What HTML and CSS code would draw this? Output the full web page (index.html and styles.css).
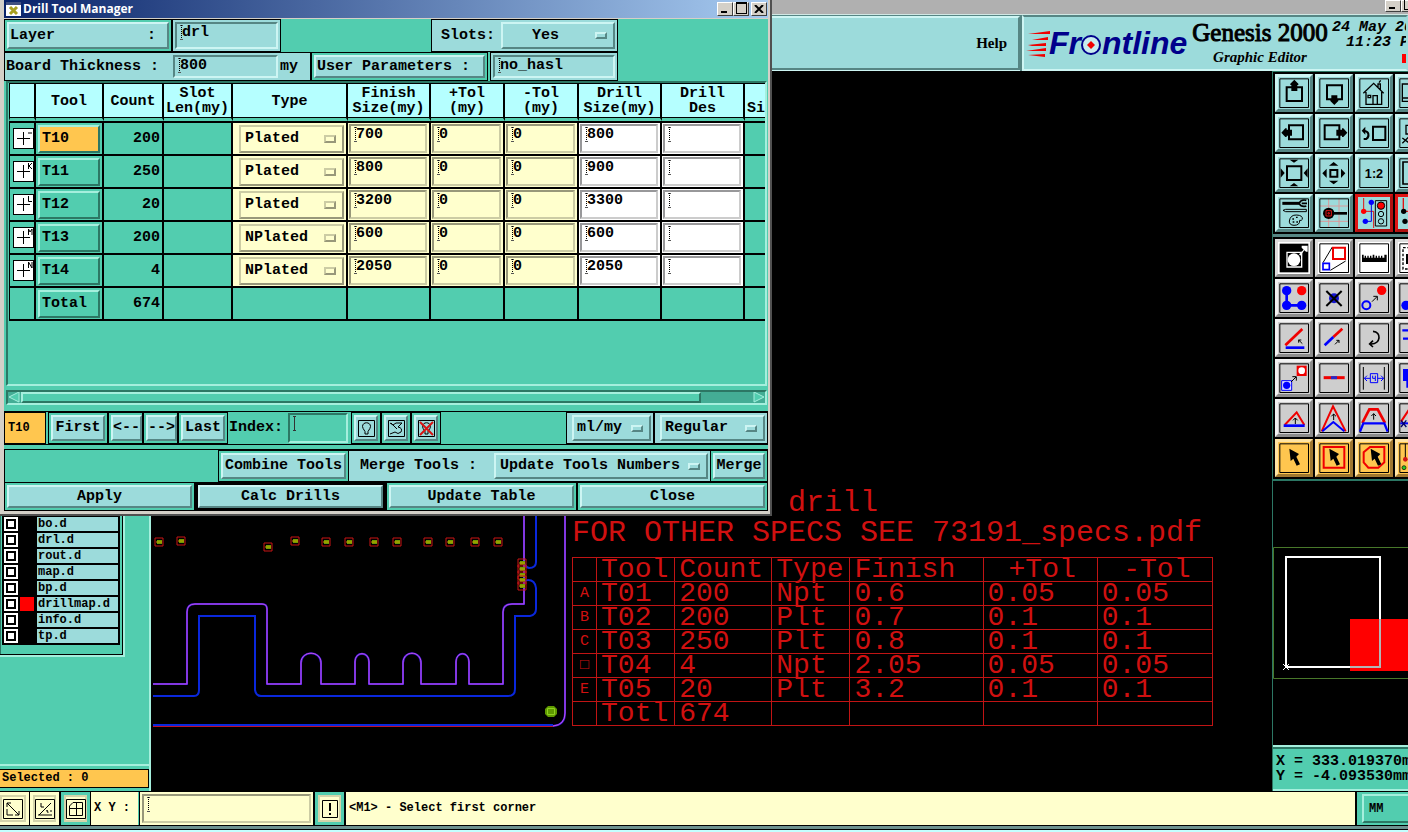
FILE: index.html
```html
<!DOCTYPE html>
<html lang="en">
<head>
<meta charset="utf-8">
<title>Genesis 2000 Graphic Editor</title>
<link rel="stylesheet" href="styles.css">
</head>
<body>
<div class="app">
  <div class="app-title"><span class="wbtn min"></span><span class="wbtn max"></span></div>
  <header class="head">
    <nav class="menubar"><a href="#help">Help</a></nav>
    <div class="brand">
      <svg class="logo" width="164" height="40" viewBox="0 0 164 40" role="img" aria-label="Frontline">
        <g fill="#f00000"><path d="M0 9 22 6V9H5zM4 15 20 12V15zM0 20 18 18V21H4zM-2 26 18 23V26zM0 30 17 29V32z"/></g>
        <g class="logo-text"><text x="21" y="29">Fr</text><text x="74" y="29">ntline</text></g>
        <circle cx="63" cy="20" r="9" fill="#c8ecee" stroke="#00008b" stroke-width="2"/><path d="M63 16l4 4-4 4-4-4z" fill="#f00000"/>
      </svg>
      <div class="product"><span class="name">Genesis 2000</span><span class="sub">Graphic Editor</span></div>
      <div class="clock"><span>24 May 20</span><span class="time">11:23 P</span><i class="led"></i></div>
    </div>
  </header>
  <main class="work">
    <aside class="side">
      <div class="layers-wrap">
        <ul class="layers">
          <li><label><input type="checkbox"><i></i><span>bo.d</span></label></li>
          <li><label><input type="checkbox"><i></i><span>drl.d</span></label></li>
          <li><label><input type="checkbox"><i></i><span>rout.d</span></label></li>
          <li><label><input type="checkbox"><i></i><span>map.d</span></label></li>
          <li><label><input type="checkbox"><i></i><span>bp.d</span></label></li>
          <li><label><input type="checkbox"><i class="on"></i><span>drillmap.d</span></label></li>
          <li><label><input type="checkbox"><i></i><span>info.d</span></label></li>
          <li><label><input type="checkbox"><i></i><span>tp.d</span></label></li>
        </ul>
      </div>
      <div class="selected">Selected : 0</div>
    </aside>
    <section class="canvas">
      <svg class="board" width="420" height="240" viewBox="151 500 420 240" fill="none">
        <defs>
          <g id="pad"><path d="M-4-4H4V4H-4z" stroke="#c81414"/><path d="M-2-2H3V2H-2z" fill="#6d9a00"/><path d="M-3 0H3" stroke="#c8a000"/></g>
        </defs>
        <g stroke="#0a28dc" stroke-width="2">
          <path d="M153 696H194Q199 696 199 690V616H255V690Q256 696 261 696H508Q515 696 515 689V616H530Q536 615 536 609V588Q535 580 528 580Q524 580 524 586"/>
          <path d="M536 500V562Q536 568 529 568Q525 567 524 562"/><path d="M153 725H553"/>
        </g>
        <path d="M153 726.5H553" stroke="#c01030"/>
        <path d="M524 500V604H512Q503 604 503 612V684H469V662C469 651 456 651 456 662V684H421V663C421 650 403 650 403 663V684H369V662C369 651 355 651 355 662V684H321V663C321 650 301 650 301 663V684H267V609Q267 604 262 604H195Q187 604 187 612V684H153M553 726Q565 725 565 713V500" stroke="#3c1edc" stroke-width="2"/>
        <path d="M524 500V604H512Q503 604 503 612V684H469V662C469 651 456 651 456 662V684H421V663C421 650 403 650 403 663V684H369V662C369 651 355 651 355 662V684H321V663C321 650 301 650 301 663V684H267V609Q267 604 262 604H195Q187 604 187 612V684H153M553 726Q565 725 565 713V500" stroke="#c850e6"/>
        <use href="#pad" x="159" y="542"/><use href="#pad" x="181" y="541"/><use href="#pad" x="268" y="547"/><use href="#pad" x="295" y="541"/>
        <use href="#pad" x="326" y="542"/><use href="#pad" x="349" y="542"/><use href="#pad" x="374" y="542"/><use href="#pad" x="397" y="542"/>
        <use href="#pad" x="428" y="542"/><use href="#pad" x="450" y="542"/><use href="#pad" x="475" y="542"/><use href="#pad" x="498" y="542"/>
        <use href="#pad" x="522" y="563"/><use href="#pad" x="522" y="569"/><use href="#pad" x="522" y="575"/><use href="#pad" x="522" y="580"/><use href="#pad" x="522" y="586"/>
        <path d="M548 706H554L557 709V714L554 717H548L545 714V709z" fill="#5f9a00"/><path d="M547.500 708.500H554.500V714.500H547.500z" stroke="#8fd020"/>
      </svg>
      <div class="plot">
        <p class="plot-title">drill</p>
        <p>FOR OTHER SPECS SEE 73191_specs.pdf</p>
        <table>
          <colgroup><col class="p1"><col class="p2"><col class="p3"><col class="p4"><col class="p5"><col class="p6"><col class="p7"></colgroup>
          <thead><tr><th></th><th>Tool</th><th>Count</th><th>Type</th><th>Finish</th><th class="c">+Tol</th><th class="c">-Tol</th></tr></thead>
          <tbody>
          <tr><td class="sym">A</td><td>T01</td><td>200</td><td>Npt</td><td>0.6</td><td>0.05</td><td>0.05</td></tr>
          <tr><td class="sym">B</td><td>T02</td><td>200</td><td>Plt</td><td>0.7</td><td>0.1</td><td>0.1</td></tr>
          <tr><td class="sym">C</td><td>T03</td><td>250</td><td>Plt</td><td>0.8</td><td>0.1</td><td>0.1</td></tr>
          <tr><td class="sym">□</td><td>T04</td><td>4</td><td>Npt</td><td>2.05</td><td>0.05</td><td>0.05</td></tr>
          <tr><td class="sym">E</td><td>T05</td><td>20</td><td>Plt</td><td>3.2</td><td>0.1</td><td>0.1</td></tr>
          <tr><td></td><td>Totl</td><td>674</td><td></td><td></td><td></td><td></td></tr>
          </tbody>
        </table>
      </div>
    </section>
    <aside class="right">
      <svg width="0" height="0" class="defs"><defs>
        <path id="fr" d="M14.500 14.500H100.500V100.500H14.500z" fill="none" stroke="#000" stroke-width="3"/>
        <path id="cur" d="M43 29 72 45 64 53 75 76 65 80 55 59 47 66z"/>
        <path id="nw" d="M0 0-15 15M-11-1H1V11" fill="none" stroke="#000" stroke-width="3"/>
        <path id="up" d="M0 18V0M-7 7 0 0 7 7" fill="none" stroke="#000" stroke-width="3"/>
      </defs></svg>
      <div class="tools cyan">
        <button aria-label="Pan up"><svg viewBox="9 9 96 96"><use href="#fr"/><path d="M35 40H81V81H35z" fill="none" stroke="#000" stroke-width="6"/><path d="M58 17 64 23 70 29V33H67V51H49V33H46V29L52 23z"/></svg></button>
        <button aria-label="Pan down"><svg viewBox="9 9 96 96"><use href="#fr"/><path d="M36 34H81V76H36z" fill="none" stroke="#000" stroke-width="6"/><path d="M49 64H67V78H70V81L58 93 46 81V78H49z"/></svg></button>
        <button aria-label="Home"><svg viewBox="9 9 96 96"><use href="#fr"/><path d="M25 58 56 28 86 58M33 54V91H80V54M54 91V65H67V91M39 64H47V71H39zM69 40V30H76V47M72 26 77 19" fill="none" stroke="#000" stroke-width="4"/></svg></button>
        <button aria-label="Window"><svg viewBox="9 9 96 96"><use href="#fr"/><path d="M22 30H90V82H22zM22 72H90" fill="none" stroke="#000" stroke-width="4"/></svg></button>
        <button aria-label="Pan left"><svg viewBox="9 9 96 96"><use href="#fr"/><path d="M42 34H84V76H42z" fill="none" stroke="#000" stroke-width="6"/><path d="M19 56 31 43H35V47H51V65H35V69H31z"/></svg></button>
        <button aria-label="Pan right"><svg viewBox="9 9 96 96"><use href="#fr"/><path d="M29 34H73V76H29z" fill="none" stroke="#000" stroke-width="6"/><path d="M97 56 85 43H81V47H64V65H81V69H85z"/></svg></button>
        <button aria-label="Previous view"><svg viewBox="9 9 96 96"><use href="#fr"/><path d="M54 38H91V78H54z" fill="none" stroke="#000" stroke-width="6"/><path d="M26 75H34Q42 70 40 59Q38 51 26 50" fill="none" stroke="#000" stroke-width="6"/><path d="M20 50 31 38V62z"/></svg></button>
        <button aria-label="Views"><svg viewBox="9 9 96 96"><use href="#fr"/><path d="M33 34H80V60H33zM22 72 44 88M22 88 44 66" fill="none" stroke="#000" stroke-width="4"/></svg></button>
        <button aria-label="Zoom out"><svg viewBox="9 9 96 96"><use href="#fr"/><path d="M36 37H79V78H36z" fill="none" stroke="#000" stroke-width="6"/><path d="M44 17H70L57 26zM44 97H70L57 87zM17 43V71L29 57zM98 43V71L86 57z"/></svg></button>
        <button aria-label="Zoom in"><svg viewBox="9 9 96 96"><use href="#fr"/><path d="M46 48H67V68H46z" fill="none" stroke="#000" stroke-width="6"/><path d="M42 35H70L56 24zM42 80H70L56 91zM35 44V72L22 58zM78 44V72L91 58z"/></svg></button>
        <button aria-label="Zoom 1:2"><svg viewBox="9 9 96 96"><use href="#fr"/><text x="57" y="72" text-anchor="middle" class="zoomtxt">1:2</text></svg></button>
        <button aria-label="Fit"><svg viewBox="9 9 96 96"><use href="#fr"/><path d="M24 24H90V90H24z" fill="none" stroke="#000" stroke-width="5"/></svg></button>
        <button aria-label="Setup"><svg viewBox="9 9 96 96"><use href="#fr"/><path d="M22 28H72" stroke="#000" stroke-width="9"/><path d="M94 19Q78 15 72 28Q79 41 94 36M80 28H96" fill="none" stroke="#000" stroke-width="5"/><path d="M24 49 32 46H94V53H32zM43 81Q46 62 65 63Q84 64 82 76Q79 81 74 79Q75 94 57 94Q42 93 43 81z" fill="none" stroke="#000" stroke-width="3"/><path d="M52 75h5M63 70h5M53 84h5M64 84h5" stroke="#000" stroke-width="4"/></svg></button>
        <button aria-label="Snap"><svg viewBox="9 9 96 96"><path d="M41 14V100M72 14V100M14 36H100M14 82H100" stroke="#d89a9a" stroke-width="3"/><use href="#fr"/><circle cx="41" cy="58" r="17"/><path d="M55 58H96" stroke="#000" stroke-width="8"/><path d="M33 50H49V66H33zM39 56H43V60H39z" fill="none" stroke="#e01414" stroke-width="3"/></svg></button>
        <button class="hot" aria-label="Display control"><svg viewBox="9 9 96 96"><path d="M26 12V52H56V102" fill="none" stroke="#e01414" stroke-width="3"/><path d="M49 24V82H30" fill="none" stroke="#0000e0" stroke-width="3"/><circle cx="49" cy="25" r="8" fill="#00f"/><circle cx="31" cy="82" r="8" fill="#00f"/><circle cx="26" cy="52" r="8" fill="#f00"/><path d="M61 20H95V96H61z" fill="none" stroke="#000" stroke-width="3"/><circle cx="78" cy="35" r="11" fill="#f00" stroke="#000" stroke-width="3"/><circle cx="78" cy="60" r="8" fill="none" stroke="#000" stroke-width="3"/><circle cx="78" cy="82" r="8" fill="none" stroke="#000" stroke-width="3"/></svg></button>
        <button class="hot" aria-label="Nets"><svg viewBox="9 9 96 96"><path d="M25 12V52H56" fill="none" stroke="#e01414" stroke-width="4"/><circle cx="26" cy="52" r="8"/><circle cx="30" cy="82" r="8"/></svg></button>
      </div>
      <div class="tools gray">
        <button class="white" aria-label="Select feature"><svg viewBox="9 9 96 96"><path d="M14 14H100V100H14z"/><path d="M36 40H80V84H36z" fill="none" stroke="#fff" stroke-width="4"/><circle cx="57" cy="62" r="19" fill="#fff"/><path d="M72 46 86 32 80 26V20H98V38H93L88 34 76 50z" fill="#fff"/></svg></button>
        <button class="white" aria-label="Resize"><svg viewBox="9 9 96 96"><use href="#fr"/><path d="M24 71 52 24M46 94 92 66" stroke="#000" stroke-width="3"/><path d="M54 26H90V60H54z" fill="none" stroke="#f00000" stroke-width="6"/><path d="M24 73H43V92H24z" fill="none" stroke="#00f" stroke-width="5"/></svg></button>
        <button class="white" aria-label="Measure"><svg viewBox="9 9 96 96"><use href="#fr"/><path d="M21 47H26V56H29V50H33V56H37V50H41V56H45V50H49V56H53V47H58V56H62V50H66V56H70V50H74V56H78V50H82V56H88V47H95V69H21z"/></svg></button>
        <button class="white" aria-label="Area"><svg viewBox="9 9 96 96"><use href="#fr"/><path d="M24 26H90V90H24z" fill="none" stroke="#000" stroke-width="4" stroke-dasharray="8 5"/><path d="M36 45V75" stroke="#000" stroke-width="6"/></svg></button>
        <button aria-label="Move"><svg viewBox="9 9 96 96"><use href="#fr"/><path d="M35 35V79H80" fill="none" stroke="#00f" stroke-width="8"/><g fill="#00f"><circle cx="35" cy="35" r="14"/><circle cx="35" cy="79" r="14"/><circle cx="80" cy="79" r="14"/></g><circle cx="80" cy="35" r="14" fill="#f00"/></svg></button>
        <button aria-label="Delete"><svg viewBox="9 9 96 96"><use href="#fr"/><circle cx="57" cy="58" r="15" fill="#1414d0"/><path d="M34 36 80 81M80 36 34 81" stroke="#000" stroke-width="6"/></svg></button>
        <button aria-label="Copy"><svg viewBox="9 9 96 96"><use href="#fr"/><circle cx="34" cy="79" r="12" fill="none" stroke="#00f" stroke-width="6"/><circle cx="80" cy="34" r="14" fill="#f00"/><use href="#nw" x="66" y="53"/></svg></button>
        <button aria-label="Add pad"><svg viewBox="9 9 96 96"><use href="#fr"/><circle cx="33" cy="79" r="14" fill="#00f"/></svg></button>
        <button aria-label="Rotate line"><svg viewBox="9 9 96 96"><use href="#fr"/><path d="M31 79 82 30" stroke="#f00000" stroke-width="8"/><path d="M32 86H88" stroke="#00f" stroke-width="8"/><path d="M82 74 71 63M71 71V63H79" fill="none" stroke="#000" stroke-width="3"/></svg></button>
        <button aria-label="Extend line"><svg viewBox="9 9 96 96"><use href="#fr"/><path d="M55 54 82 29" stroke="#f00000" stroke-width="8"/><path d="M29 79 55 54" stroke="#00f" stroke-width="8"/><path d="M60 76 72 64M64 64H72V72" fill="none" stroke="#000" stroke-width="3"/></svg></button>
        <button aria-label="Arc"><svg viewBox="9 9 96 96"><use href="#fr"/><path d="M54 37C80 38 78 76 48 75M54 65 44 75 54 84" fill="none" stroke="#000" stroke-width="5"/></svg></button>
        <button aria-label="Align"><svg viewBox="9 9 96 96"><use href="#fr"/><path d="M22 34H60M24 59H60" stroke="#00f" stroke-width="7"/></svg></button>
        <button aria-label="Replace"><svg viewBox="9 9 96 96"><use href="#fr"/><path d="M65 20H95V51H65z" fill="#f00000"/><circle cx="80" cy="35" r="10" fill="#fff"/><path d="M20 65H50V94H20z" fill="#e0e0ff" stroke="#00f" stroke-width="3"/><circle cx="35" cy="79" r="11" fill="#00f"/><use href="#nw" x="63" y="54"/></svg></button>
        <button aria-label="Merge line"><svg viewBox="9 9 96 96"><use href="#fr"/><path d="M26 56H89" stroke="#f00000" stroke-width="9"/><path d="M48 56H66" stroke="#2828c8" stroke-width="9"/></svg></button>
        <button aria-label="Spacing"><svg viewBox="9 9 96 96"><path d="M25 24V92M88 24V92" stroke="#000" stroke-width="3"/><use href="#fr"/><path d="M28 58H46M68 58H86M36 50 28 58 36 66M78 50 86 58 78 66M46 44H68V71H46zM53 50V58H61V66M61 50V58" fill="none" stroke="#00f" stroke-width="3"/></svg></button>
        <button aria-label="Text"><svg viewBox="9 9 96 96"><use href="#fr"/><path d="M24 30H90V66H44V86H34V66H24z" fill="#00f"/></svg></button>
        <button aria-label="Triangle"><svg viewBox="9 9 96 96"><use href="#fr"/><path d="M29 78 65 40 88 78" fill="none" stroke="#f00000" stroke-width="6"/><path d="M26 80H89" stroke="#00f" stroke-width="8"/><use href="#up" x="61" y="57"/></svg></button>
        <button aria-label="Corner"><svg viewBox="9 9 96 96"><use href="#fr"/><path d="M20 97 54 22 92 97" fill="none" stroke="#f00000" stroke-width="6"/><path d="M22 97 55 69 88 97" fill="none" stroke="#00f" stroke-width="6"/><use href="#up" x="56" y="45"/></svg></button>
        <button aria-label="Chamfer"><svg viewBox="9 9 96 96"><use href="#fr"/><path d="M22 72 43 31H68L90 72" fill="none" stroke="#f00000" stroke-width="8"/><path d="M15 98 25 73H88L98 98" fill="none" stroke="#00f" stroke-width="7"/><use href="#up" x="56" y="44"/></svg></button>
        <button aria-label="Trim"><svg viewBox="9 9 96 96"><use href="#fr"/><path d="M18 68 50 20" stroke="#f00000" stroke-width="6"/><path d="M16 73H60" stroke="#00f" stroke-width="6"/><path d="M18 64 34 84M34 64 18 84" stroke="#006" stroke-width="4"/></svg></button>
        <button class="gold" aria-label="Select"><svg viewBox="9 9 96 96"><use href="#fr"/><use href="#cur"/></svg></button>
        <button class="gold" aria-label="Select rectangle"><svg viewBox="9 9 96 96"><use href="#fr"/><path d="M26 24H88V86H26z" fill="none" stroke="#f00000" stroke-width="6"/><use href="#cur"/></svg></button>
        <button class="gold" aria-label="Select polygon"><svg viewBox="9 9 96 96"><use href="#fr"/><path d="M45 24H88V70L70 86H40L26 70V40z" fill="none" stroke="#f00000" stroke-width="6"/><use href="#cur" x="4"/></svg></button>
        <button class="gold" aria-label="Select net"><svg viewBox="9 9 96 96"><use href="#fr"/><path d="M31 14V60" stroke="#000" stroke-width="3"/><circle cx="31" cy="61" r="7" fill="#d01414"/><circle cx="27" cy="86" r="6" fill="#28c828" stroke="#000" stroke-width="2"/></svg></button>
      </div>
      <div class="overview">
        <svg width="135" height="132" viewBox="1273 548 135 132" fill="none">
          <path d="M1420 548.500H1273.500V679.500H1420" stroke="#48782a"/><path d="M1350 620H1420V672H1350z" fill="#f00"/>
          <path d="M1286 558H1380V668H1286z" stroke="#fff" stroke-width="2"/><path d="M1380 620V668H1350" stroke="#b4b4b4" stroke-width="2"/><path d="M1283 665 1289 671M1289 665 1283 671" stroke="#fff"/>
        </svg>
      </div>
      <div class="coords"><span>X = 333.019370mm</span><span>Y = -4.093530mm</span></div>
    </aside>
  </main>
  <footer class="status">
    <button class="sb first" aria-label="Corner mode"><svg width="20" height="20" viewBox="0 0 20 20"><path d="M.5.500H19.500V19.500H.5zM4 4 16 16M4 8V4H8M12 16H16V12M4 10V16H10" fill="none" stroke="#000"/></svg></button>
    <button class="sb" aria-label="Angle mode"><svg width="20" height="20" viewBox="0 0 20 20"><path d="M.5.500H19.500V19.500H.5zM3 16H17M4 16 16 4M6 4V8H9M11 12Q13 10 13 14M15 12H17" fill="none" stroke="#000"/></svg></button>
    <button class="sb teal" aria-label="Grid mode"><svg width="20" height="20" viewBox="0 0 20 20"><path d="M.5.500H19.500V19.500H.5zM3.500 7 7 3.500H16.500V16.500H3.500zM10.500 3V17M3 9.500H17" fill="none" stroke="#000"/></svg></button>
    <label class="xy" for="xy">X Y :</label>
    <span class="xyf"><input id="xy" class="in" type="text"></span>
    <button class="sb teal" aria-label="Alert"><svg width="16" height="18" viewBox="0 0 16 18"><path d="M.5.500H15.500V17.500H.5z" fill="none" stroke="#000"/><path d="M7 3H9V11H7zM7 13H9V15H7z"/></svg></button>
    <div class="msg">&lt;M1&gt; - Select first corner</div>
    <div class="unit"><button>MM</button></div>
  </footer>
</div>

<div class="dialog" role="dialog" aria-label="Drill Tool Manager">
  <div class="dlg-title">
    <svg width="15" height="14" viewBox="0 0 15 14"><path d="M0 0H15V14H0z" fill="#fff"/><path d="M0 0H15V3H0z" fill="#405080"/><path d="M4 5 11 12M11 5 4 12" stroke="#a8a020" stroke-width="3"/></svg>
    <h1>Drill Tool Manager</h1>
    <button class="wbtn min" aria-label="Minimize"></button><button class="wbtn max" aria-label="Maximize"></button><button class="wbtn close" aria-label="Close window"><svg width="10" height="8" viewBox="0 0 10 8"><path d="M1 0 9 8M9 0 1 8" stroke="#000" stroke-width="2"/></svg></button>
  </div>
  <div class="dlg-body">
    <div class="row r1">
      <div class="box w168"><button class="btn left wide"><span>Layer</span><span>:</span></button></div>
      <div class="box c w109"><input class="in" aria-label="Layer" value="drl"></div>
      <div class="grow"></div>
      <div class="box c slots"><label for="slots">Slots:</label><span class="opt"><select id="slots" class="mid"><option>Yes</option></select><i></i></span></div>
      <div class="tail"></div>
    </div>
    <div class="row r2">
      <div class="box c thick"><label for="bt">Board Thickness :</label><input id="bt" class="in" value="800"><span>my</span></div>
      <div class="box w177"><button class="btn left">User Parameters :</button></div>
      <div class="box c w128"><input class="in" aria-label="User Parameters" value="no_hasl"></div>
    </div>
    <div class="tablebox">
      <table class="drills">
        <colgroup><col class="k1"><col class="k2"><col class="k3"><col class="k4"><col class="k5"><col class="k6"><col class="k7"><col class="k7"><col class="k6"><col class="k6"><col class="k6"></colgroup>
        <thead><tr><th></th><th>Tool</th><th>Count</th><th>Slot<br>Len(my)</th><th>Type</th><th>Finish<br>Size(my)</th><th>+Tol<br>(my)</th><th>-Tol<br>(my)</th><th>Drill<br>Size(my)</th><th>Drill<br>Des</th><th class="cut"><br>Si</th></tr></thead>
        <tbody>
          <tr><td><svg class="sym" viewBox="0 0 19 19"><path d="M9.500 3V16M3 9.500H16M14 4H18"/></svg></td><td><button class="tool gold">T10</button></td><td class="n">200</td><td></td><td class="y"><span class="opt"><select aria-label="T10 type"><option>Plated</option></select><i></i></span></td><td class="y"><input class="in" aria-label="T10 finish" value="700"></td><td class="y"><input class="in" aria-label="T10 +tol" value="0"></td><td class="y"><input class="in" aria-label="T10 -tol" value="0"></td><td class="w"><input class="in" aria-label="T10 size" value="800"></td><td class="w"><input class="in" aria-label="T10 des"></td><td></td></tr>
          <tr><td><svg class="sym" viewBox="0 0 19 19"><path d="M9.500 3V16M3 9.500H16M14.500 1V7M15 4 18 1M15 4 18 7"/></svg></td><td><button class="tool">T11</button></td><td class="n">250</td><td></td><td class="y"><span class="opt"><select aria-label="T11 type"><option>Plated</option></select><i></i></span></td><td class="y"><input class="in" aria-label="T11 finish" value="800"></td><td class="y"><input class="in" aria-label="T11 +tol" value="0"></td><td class="y"><input class="in" aria-label="T11 -tol" value="0"></td><td class="w"><input class="in" aria-label="T11 size" value="900"></td><td class="w"><input class="in" aria-label="T11 des"></td><td></td></tr>
          <tr><td><svg class="sym" viewBox="0 0 19 19"><path d="M9.500 3V16M3 9.500H16M14.500 1V6.500H18"/></svg></td><td><button class="tool">T12</button></td><td class="n">20</td><td></td><td class="y"><span class="opt"><select aria-label="T12 type"><option>Plated</option></select><i></i></span></td><td class="y"><input class="in" aria-label="T12 finish" value="3200"></td><td class="y"><input class="in" aria-label="T12 +tol" value="0"></td><td class="y"><input class="in" aria-label="T12 -tol" value="0"></td><td class="w"><input class="in" aria-label="T12 size" value="3300"></td><td class="w"><input class="in" aria-label="T12 des"></td><td></td></tr>
          <tr><td><svg class="sym" viewBox="0 0 19 19"><path d="M9.500 3V16M3 9.500H16M14.500 7V1L16 4 18 1V7"/></svg></td><td><button class="tool">T13</button></td><td class="n">200</td><td></td><td class="y"><span class="opt"><select aria-label="T13 type"><option>NPlated</option></select><i></i></span></td><td class="y"><input class="in" aria-label="T13 finish" value="600"></td><td class="y"><input class="in" aria-label="T13 +tol" value="0"></td><td class="y"><input class="in" aria-label="T13 -tol" value="0"></td><td class="w"><input class="in" aria-label="T13 size" value="600"></td><td class="w"><input class="in" aria-label="T13 des"></td><td></td></tr>
          <tr><td><svg class="sym" viewBox="0 0 19 19"><path d="M9.500 3V16M3 9.500H16M14.500 7V1L18 7V1"/></svg></td><td><button class="tool">T14</button></td><td class="n">4</td><td></td><td class="y"><span class="opt"><select aria-label="T14 type"><option>NPlated</option></select><i></i></span></td><td class="y"><input class="in" aria-label="T14 finish" value="2050"></td><td class="y"><input class="in" aria-label="T14 +tol" value="0"></td><td class="y"><input class="in" aria-label="T14 -tol" value="0"></td><td class="w"><input class="in" aria-label="T14 size" value="2050"></td><td class="w"><input class="in" aria-label="T14 des"></td><td></td></tr>
          <tr><td></td><td><button class="tool">Total</button></td><td class="n">674</td><td></td><td></td><td></td><td></td><td></td><td></td><td></td><td></td></tr>
        </tbody>
      </table>
    </div>
    <div class="hscroll"><svg width="12" height="11" viewBox="0 0 12 11"><path d="M11 0V10L1 5z" fill="#52cdaf" stroke="#a5efdd"/></svg><span class="thumb"></span><span class="gap"></span><svg width="12" height="11" viewBox="0 0 12 11"><path d="M1 0V10L11 5z" fill="#52cdaf" stroke="#a5efdd"/></svg></div>
    <div class="row navrow">
      <div class="box gold cur">T10</div>
      <div class="box w60"><button class="btn">First</button></div>
      <div class="box w35"><button class="btn">&lt;--</button></div>
      <div class="box w35"><button class="btn">--&gt;</button></div>
      <div class="box w50"><button class="btn">Last</button></div>
      <label for="idx">Index:</label><input id="idx" class="in idx">
      <div class="box w30"><button class="btn" aria-label="Highlight"><svg width="17" height="17" viewBox="0 0 17 17" fill="none" stroke="#000"><path d="M.5.500H16.500V16.500H.5zM7 11.500Q4.500 8 4.500 6.500C4.500 1.500 12.500 1.500 12.500 6.500Q12.500 8 10 11.500V14H7z"/></svg></button></div>
      <div class="box w30"><button class="btn" aria-label="Redraw"><svg width="17" height="17" viewBox="0 0 17 17" fill="none" stroke="#000"><path d="M.5.500H16.500V16.500H.5zM2 3 5 5 8 3H14L10 7Q15 8 13 12Q10 15 7 12L2 14M3 3 9 9"/></svg></button></div>
      <div class="box w30"><button class="btn" aria-label="Clear highlight"><svg width="17" height="17" viewBox="0 0 17 17" fill="none" stroke="#000"><path d="M.5.500H16.500V16.500H.5zM7 11.500Q4.500 8 4.500 6.500C4.500 1.500 12.500 1.500 12.500 6.500Q12.500 8 10 11.500V14H7z"/><path d="M2 2 15 15M15 2 2 15" stroke="#d81414" stroke-width="2"/></svg></button></div>
      <div class="grow"></div>
      <div class="box c units"><span class="opt"><select aria-label="Units"><option>ml/my</option></select><i></i></span></div>
      <div class="box c mode"><span class="opt"><select aria-label="Mode"><option>Regular</option></select><i></i></span></div>
    </div>
    <div class="row mergerow">
      <div class="grow"></div>
      <div class="box w131"><button class="btn">Combine Tools</button></div>
      <div class="merge"><label for="mt">Merge Tools :</label><span class="opt"><select id="mt"><option>Update Tools Numbers</option></select><i></i></span></div>
      <div class="box w58"><button class="btn">Merge</button></div>
    </div>
    <div class="row actions">
      <div class="box"><button class="btn">Apply</button></div>
      <div class="box default"><button class="btn">Calc Drills</button></div>
      <div class="box"><button class="btn">Update Table</button></div>
      <div class="box"><button class="btn">Close</button></div>
    </div>
  </div>
</div>
</body>
</html>
```
FILE: styles.css
```css
:root {
  --teal: #52cdaf;
  --teal-hi: #a5efdd;
  --teal-lo: #2c7764;
  --cyan: #9cdbdb;
  --cyan-hi: #cdf5f3;
  --cyan-lo: #568684;
  --cream: #ffffcd;
  --gold: #ffc64f;
  --cap: #d4d0c8;
}
* { box-sizing: border-box; }
body {
  margin: 0;
  background: #000;
  color: #000;
  font: bold 15px/16px "Liberation Mono", monospace;
  overflow: hidden;
}
button, input, select {
  font: inherit;
  color: inherit;
  margin: 0;
  padding: 0;
  border-radius: 0;
  outline: 0;
}
button svg { display: block; }
ul, p { margin: 0; padding: 0; list-style: none; }

/* editor */
.app { display: flex; flex-direction: column; height: 100vh; }
.app-title {
  display: flex;
  justify-content: flex-end;
  height: 15px;
  margin-right: -9px;
  background: #b0b0b0;
  border-bottom: 1px solid #d0e8e4;
}
.wbtn {
  display: flex;
  align-items: flex-end;
  justify-content: center;
  flex: none;
  width: 16px;
  height: 14px;
  background: var(--cap);
  border: 1px solid;
  border-color: #fff #404040 #404040 #fff;
}
.app-title .wbtn { height: 12px; }
.min::after { content: ""; width: 6px; height: 2px; margin: 0 3px 2px 0; background: #000; }
.max::after { content: ""; width: 9px; height: 9px; margin-bottom: 1px; border: 1px solid #000; border-top-width: 2px; }
.wbtn.close { align-items: center; margin-left: 2px; }
.head { display: flex; height: 56px; flex: none; background: var(--cyan-lo); }
.menubar {
  flex: 1;
  display: flex;
  align-items: center;
  justify-content: flex-end;
  padding-right: 11px;
  margin: 1px 2px 1px 0;
  background: var(--cyan);
  border: 2px solid;
  border-color: var(--cyan-hi) var(--cyan-lo) var(--cyan-lo) var(--cyan-hi);
  box-shadow: 0 1px var(--cyan-hi);
  font: bold 15px/18px "Liberation Serif", serif;
}
.menubar a { color: #000; text-decoration: none; }
.brand {
  display: flex;
  width: 386px;
  overflow: hidden;
  background: var(--cyan);
  border: 2px solid;
  border-color: var(--cyan-lo) transparent var(--cyan-hi) var(--cyan-hi);
  padding: 3px 0 0 4px;
}
.logo { flex: none; margin-top: 5px; overflow: visible; }
.logo-text { font: italic bold 32px "Liberation Sans", sans-serif; fill: #00008b; }
.product { display: flex; flex-direction: column; align-items: center; flex: none; width: 136px; white-space: nowrap; font-family: "Liberation Serif", serif; }
.product .name { font-size: 25px; line-height: 26px; font-weight: 500; -webkit-text-stroke: 1px #000; }
.product .sub { font-size: 15px; line-height: 22px; font-style: italic; }
.clock { display: flex; flex-direction: column; flex: none; padding-left: 4px; font-style: italic; line-height: 15px; }
.clock .time { padding-left: 14px; }
.led { width: 4px; height: 9px; margin: 4px 0 0 70px; background: #f00; }
.work { flex: 1; display: grid; grid-template-columns: 151px 1fr 136px; min-height: 0; }
.side { display: flex; flex-direction: column; background: var(--teal); border-right: 2px solid var(--teal-hi); }
.layers-wrap {
  display: flex;
  flex-direction: column;
  justify-content: flex-end;
  width: 125px;
  height: 586px;
  padding: 0 3px 10px 2px;
  border-right: 2px solid var(--teal-hi);
  border-bottom: 2px solid var(--teal-hi);
  box-shadow: inset -1px -1px #000, inset 1px 0 var(--teal-lo);
}
.layers { background: #000; padding: 0 1px 1px 2px; font-size: 12px; line-height: 14px; }
.layers label { display: flex; align-items: center; height: 16px; padding: 1px 1px 1px 0; }
.layers input { appearance: none; width: 14px; height: 14px; border: 2px solid #fff; background: #fff; box-shadow: inset 0 0 0 2px #000; }
.layers i { width: 14px; height: 14px; margin: 0 3px 0 2px; }
.layers i.on { background: #f00; }
.layers span { flex: 1; height: 14px; padding-left: 1px; background: var(--cyan); }
.selected {
  margin: auto 0 3px;
  height: 19px;
  padding-left: 2px;
  background: var(--gold);
  border: 1px solid #000;
  border-left: 0;
  box-shadow: 0 -3px var(--teal), 0 -5px var(--teal-hi);
  font-size: 12px;
  line-height: 17px;
}
.canvas { position: relative; background: #000; overflow: hidden; }
.board { position: absolute; left: 0; top: 429px; }
.plot {
  position: absolute;
  left: 421px;
  top: 417px;
  color: #d01010;
  font: 30px/34px "Liberation Mono", monospace;
  white-space: nowrap;
}
.plot p { line-height: 30px; }
.plot-title { padding-left: 216px; }
.plot table { table-layout: fixed; width: 641px; margin-top: 9px; border-collapse: collapse; font-size: 28px; }
.plot th, .plot td { height: 24px; padding: 0 0 0 4px; border: 1px solid #c01414; font-weight: normal; text-align: left; line-height: 23px; }
.plot th.c { text-align: center; }
.plot td.sym { padding: 0; text-align: center; font-size: 15px; }
.p1 { width: 24px; } .p2 { width: 78px; } .p3 { width: 97px; } .p4 { width: 78px; } .p5 { width: 133px; } .p6 { width: 114px; } .p7 { width: 115px; }
.right { display: flex; flex-direction: column; background: #000; border-left: 1px solid var(--teal-lo); overflow: hidden; min-height: 0; }
.defs { position: absolute; }
.tools { display: grid; grid-template-columns: repeat(4, 38px); grid-auto-rows: 38px; gap: 2px; padding: 3px 2px 2px; flex: none; box-shadow: inset 0 1px var(--teal-lo); }
.tools button { border: 3px solid; background: var(--cyan); border-color: var(--cyan-hi) var(--cyan-lo) var(--cyan-lo) var(--cyan-hi); }
.tools svg { width: 32px; height: 32px; }
.tools.gray { border-top: 3px solid var(--cyan-lo); padding-top: 2px; padding-bottom: 0; box-shadow: none; }
.tools.gray button { background: #cecece; border-color: #f2f2f2 #8c8c8c #8c8c8c #f2f2f2; }
.tools .hot { border-color: #e01414 #b01010 #b01010 #e01414; }
.tools.gray .white { background: #fff; border-color: #dcdcdc #8c8c8c #8c8c8c #dcdcdc; }
.tools.gray .gold { background: var(--gold); border-color: #ffe4a4 #a07830 #a07830 #ffe4a4; }
.zoomtxt { font: bold 38px "Liberation Sans", sans-serif; }
.overview { flex: 1; display: flex; align-items: center; min-height: 0; margin-top: 2px; border-top: 2px solid var(--teal-lo); }
.coords { display: flex; flex-direction: column; height: 46px; flex: none; padding: 7px 0 0 3px; background: var(--teal); border: 2px solid var(--teal-hi); border-width: 2px 0; box-shadow: inset 0 2px var(--teal-lo); white-space: nowrap; line-height: 15px; }
.status {
  display: flex;
  flex: none;
  height: 41px;
  border-top: 1px solid #000;
  background: linear-gradient(#000 33px, #000 34px, #6d9290 34px, #6d9290 37px, #000 37px, #000 38px, #c4ffff 38px);
  padding-bottom: 7px;
  font-size: 12px;
}
.sb { flex: none; display: flex; align-items: center; justify-content: center; width: 29px; margin-right: 1px; background: var(--cream); border: 3px solid var(--cream); box-shadow: inset 0 0 0 2px #d4d4aa; }
.sb.first { border-left-width: 0; }
.sb.teal { border-color: var(--teal); margin: 0 1px; }
.xy { width: 48px; padding-left: 3px; line-height: 32px; background: var(--cream); border-right: 1px solid var(--teal); flex: none; white-space: nowrap; }
.xyf { display: flex; width: 173px; flex: none; padding: 2px; margin: 0 1px; background: var(--cream); }
.xyf .in { border-color: #98987a #cccca4 #cccca4 #98987a; }
.msg { flex: 1; margin-left: 1px; padding-left: 3px; line-height: 32px; background: var(--cream); }
.unit { display: flex; width: 51px; margin-left: 2px; padding: 2px 0 2px 5px; background: var(--teal); overflow: hidden; }
.unit button { flex: none; width: 60px; padding-left: 5px; text-align: left; background: var(--teal); border: 2px solid; border-color: var(--teal-hi) var(--teal-lo) var(--teal-lo) var(--teal-hi); }

/* drill tool manager window */
.dialog {
  position: absolute;
  left: 0;
  top: 0;
  width: 772px;
  padding: 0 2px 3px 2px;
  background: var(--cap);
  border-right: 2px solid #505050;
  border-bottom: 2px solid #505050;
}
.dlg-title { display: flex; align-items: center; height: 18px; margin-left: 2px; padding: 0 1px 0 2px; background: linear-gradient(90deg, #0a246a, #a6caf0); }
.dlg-title h1 { flex: 1; margin: 0 0 0 2px; font: bold 12px/16px "Open Sans", sans-serif; color: #fff; }
.dlg-body { display: flex; flex-direction: column; margin: 1px 0 0 2px; background: var(--teal); }
.row { display: flex; flex: none; }
.grow { flex: 1; }
.box { display: flex; align-items: stretch; flex: none; padding: 2px; background: var(--teal); border: 1px solid #000; }
.box.c, .merge { background: var(--cyan); }
.box.gold, .tool.gold { background: var(--gold); }
.btn { flex: 1; display: flex; align-items: center; justify-content: center; background: var(--cyan); border: 2px solid; border-color: var(--cyan-hi) var(--cyan-lo) var(--cyan-lo) var(--cyan-hi); white-space: nowrap; }
.btn.left { justify-content: flex-start; padding-left: 1px; }
.btn.wide { justify-content: space-between; padding-right: 11px; }
.opt { flex: 1; display: flex; align-items: center; background: var(--cyan); border: 2px solid; border-color: var(--cyan-hi) var(--cyan-lo) var(--cyan-lo) var(--cyan-hi); }
.opt select { flex: 1; min-width: 0; appearance: none; background: none; border: 0; padding-left: 4px; }
.opt select.mid { padding-left: 29px; }
.opt i { flex: none; width: 12px; height: 7px; margin-right: 6px; border: 2px solid; border-color: var(--cyan-hi) var(--cyan-lo) var(--cyan-lo) var(--cyan-hi); }
.in {
  display: block;
  flex: 1;
  min-width: 0;
  width: 100%;
  padding: 0 0 9px 5px;
  background-color: transparent;
  background-image: repeating-linear-gradient(#000 0 1px, transparent 1px 2px), linear-gradient(#555, #555), linear-gradient(#555, #555);
  background-size: 1px 14px, 3px 1px, 3px 1px;
  background-position: 4px 1px, 3px 1px, 3px 15px;
  background-repeat: no-repeat;
  border: 2px solid;
  border-color: var(--cyan-lo) var(--cyan-hi) var(--cyan-hi) var(--cyan-lo);
}
.r1 { height: 33px; }
.r2 { height: 29px; }
.w168 { width: 168px; } .w109 { width: 109px; } .w177 { width: 177px; } .w128 { width: 128px; margin-left: 2px; }
.w131 { width: 131px; } .w58 { width: 58px; } .w60 { width: 60px; margin-left: 2px; } .w35 { width: 35px; } .w50 { width: 50px; } .w30 { width: 30px; }
.slots { width: 187px; align-items: center; }
.slots label { width: 67px; padding-left: 7px; }
.slots .opt, .merge .opt { align-self: stretch; }
.tail { width: 150px; }
.thick { width: 307px; align-items: center; padding-left: 0; }
.thick label { width: 168px; padding-left: 1px; }
.thick .in { flex: none; width: 105px; align-self: stretch; }
.thick span { padding-left: 2px; }
.r1 .in { padding-bottom: 6px; }
.r2 .in { padding-bottom: 2px; }
.tablebox {
  height: 305px;
  margin: 0 1px 0 2px;
  padding: 0 0 0 1px;
  overflow: hidden;
  border: 2px solid;
  border-color: var(--teal-lo) var(--teal-hi) var(--teal-hi) var(--teal-lo);
}
.drills { table-layout: fixed; width: 819px; border-spacing: 0; }
.k1 { width: 27px; } .k2 { width: 68px; } .k3 { width: 60px; } .k4 { width: 69px; } .k5 { width: 115px; } .k6 { width: 83px; } .k7 { width: 74px; }
.drills th {
  height: 38px;
  padding: 1px 0 0;
  line-height: 15px;
  background: #b5ffff;
  background-clip: padding-box;
  border-right: 2px solid #000;
  border-bottom: 3px solid var(--teal);
  box-shadow: inset 0 1px #000, inset 0 -1px #000;
  white-space: nowrap;
}
.drills th.cut { text-align: left; padding-left: 2px; }
.drills td { height: 33px; padding: 0 2px 0 1px; border-right: 2px solid #000; border-bottom: 2px solid #000; background: var(--teal); }
.drills tbody tr:first-child td { height: 35px; border-top: 2px solid #000; }
.drills td:first-child, .drills th:first-child { border-left: 1px solid #000; }
.drills .n { text-align: right; }
.drills td.y { background: var(--cream); }
.drills td.w { background: #fff; }
.drills .in { height: 29px; border-color: #98987a #cccca4 #cccca4 #98987a; }
.drills .w .in { border-color: #98989a #cccccc #cccccc #98989a; }
.drills .opt { height: 28px; margin: 0 0 0 5px; background: var(--cream); border-color: #cccca4 #98987a #98987a #cccca4; }
.drills .opt i { height: 8px; border-color: #cccca4 #98987a #98987a #cccca4; }
.drills .sym { display: block; width: 21px; height: 21px; margin-left: 2px; background: #fff; border: 1px solid #000; fill: none; stroke: #000; }
.tool { display: block; width: 62px; height: 28px; margin-left: 1px; padding-left: 2px; text-align: left; background: var(--teal); border: 2px solid; border-color: var(--teal-hi) var(--teal-lo) var(--teal-lo) var(--teal-hi); }
.hscroll { display: flex; height: 15px; margin: 4px 1px 6px 2px; background: #44ad95; border: 2px solid; border-color: var(--teal-lo) var(--teal-hi) var(--teal-hi) var(--teal-lo); }
.hscroll .thumb { flex: 680; background: var(--teal); border: 2px solid; border-color: var(--teal-hi) var(--teal-lo) var(--teal-lo) var(--teal-hi); margin-left: 1px; }
.hscroll .gap { flex: 52; }
.navrow { height: 34px; border: solid #000; border-width: 1px 0; }
.navrow > .cur { width: 42px; padding-left: 3px; align-items: center; font-size: 12px; }
.navrow > label { width: 60px; padding-left: 1px; line-height: 32px; }
.navrow .in.idx { flex: none; width: 60px; margin: 1px 3px 1px 0; border-color: var(--teal-lo) var(--teal-hi) var(--teal-hi) var(--teal-lo); background-image: linear-gradient(#333, #333), linear-gradient(#333, #333), linear-gradient(#333, #333); }
.units { width: 88px; padding-left: 5px; }
.units .opt select, .mode .opt select { padding-left: 3px; }
.mode { width: 114px; padding-left: 5px; }
.mergerow { height: 33px; margin-top: 4px; border-top: 1px solid #000; border-left: 1px solid #000; }
.merge { flex: none; display: flex; align-items: center; width: 361px; padding: 2px 2px 2px 0; border: solid #000; border-width: 1px 0; }
.merge label { width: 145px; padding-left: 11px; }
.actions { height: 29px; }
.actions .box { flex: 1; }
.actions .default { background: #000; }
```
